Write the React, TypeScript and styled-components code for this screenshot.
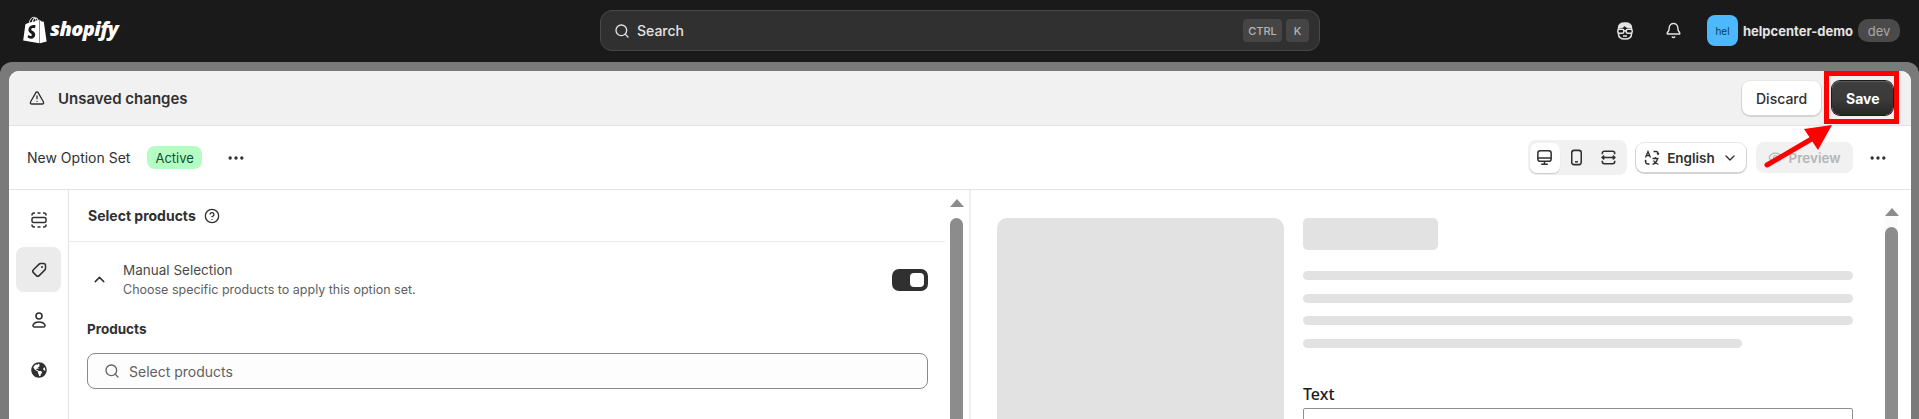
import React from "react";
import styled, { createGlobalStyle } from "styled-components";
import { FaShopify, FaGlobeAmericas } from "react-icons/fa";
import { Search, Bell, TriangleAlert, Ellipsis, ChevronDown, ChevronUp, CircleHelp, Eye } from "lucide-react";

const GlobalStyle = createGlobalStyle`
  html, body { margin: 0; padding: 0; background: #1a1a1a; }
  body { font-family: Inter, "Liberation Sans", sans-serif; }
  * { box-sizing: border-box; }
`;

const Page = styled.div`
  position: relative;
  width: 1919px;
  height: 419px;
  overflow: hidden;
  background: #1a1a1a;
`;

const TopBar = styled.header`
  height: 62px;
  display: grid;
  grid-template-columns: 600px 720px 1fr;
  align-items: start;
  padding-top: 10px;
`;

const Logo = styled.div`
  display: flex;
  align-items: center;
  gap: 3px;
  padding: 6px 0 0 23px;
  color: #fff;
  svg { width: 24px; height: 28px; }
`;

const LogoText = styled.span`
  font-family: "Open Sans", sans-serif;
  font-size: 20px;
  font-style: italic;
  font-weight: 800;
  letter-spacing: -0.6px;
  margin-top: -3px;
`;

const SearchBar = styled.div`
  height: 41px;
  display: flex;
  align-items: center;
  gap: 4px;
  padding: 0 10px 0 13px;
  background: #303030;
  border: 1px solid #484848;
  border-radius: 12px;
  color: #e3e3e3;
  font-size: 14px;
  font-weight: 450;
`;

const SearchLabel = styled.span`
  flex: 1;
  margin-left: 3px;
`;

const Key = styled.kbd<{ $width: number }>`
  width: ${(p) => p.$width}px;
  height: 23px;
  display: flex;
  align-items: center;
  justify-content: center;
  background: #454545;
  border-radius: 4px;
  color: #b5b5b5;
  font: 500 11px Inter, sans-serif;
`;

const TopActions = styled.div`
  display: flex;
  align-items: center;
  height: 41px;
  padding-left: 280px;
  color: #e3e3e3;
`;

const TopIcon = styled.span`
  width: 49px;
  display: flex;
  justify-content: center;
`;

const Avatar = styled.span`
  width: 31px;
  height: 31px;
  margin: 0 5px 0 9px;
  display: flex;
  align-items: center;
  justify-content: center;
  background: #4bb9fb;
  border-radius: 8px;
  color: #0b3d5c;
  font-size: 10px;
`;

const ShopName = styled.span`
  font-size: 13px;
  font-weight: 650;
  color: #e3e3e3;
`;

const DevPill = styled.span`
  margin-left: 5px;
  width: 42px;
  height: 23px;
  display: flex;
  align-items: center;
  justify-content: center;
  background: #4a4a4a;
  border-radius: 10px;
  color: #a8a8a8;
  font-size: 13px;
`;

const Frame = styled.div`
  height: 357px;
  padding: 9px 8px 0 9px;
  background: #7a7a7a;
  border-radius: 12px 12px 0 0;
`;

const Panel = styled.main`
  height: 348px;
  background: #fff;
  border-radius: 10px 10px 0 0;
  overflow: hidden;
`;

const SaveBar = styled.div`
  height: 55px;
  display: flex;
  align-items: center;
  padding: 0 18px 0 20px;
  background: #f1f1f1;
  border-bottom: 1px solid #e3e3e3;
`;

const SaveTitle = styled.span`
  flex: 1;
  display: flex;
  align-items: center;
  gap: 13px;
  color: #303030;
  font-size: 15px;
  font-weight: 600;
`;

const Button = styled.button<{ $dark?: boolean }>`
  height: 34px;
  padding: 0 14px;
  border: 0;
  border-radius: 8px;
  font: ${(p) => (p.$dark ? 650 : 550)} 14px Inter, sans-serif;
  color: ${(p) => (p.$dark ? "#fff" : "#303030")};
  background: ${(p) => (p.$dark ? "linear-gradient(#3f3f3f, #3a3a3a 55%, #262626)" : "#fff")};
  box-shadow: ${(p) =>
    p.$dark
      ? "0 0 0 1px #1a1a1a, inset 0 1px 0 #5a5a5a"
      : "0 1px 0 1px #d4d4d4, 0 0 0 1px #e8e8e8"};
  margin-left: ${(p) => (p.$dark ? "11px" : "0")};
  width: ${(p) => (p.$dark ? "61px" : "79px")};
`;

const SubHeader = styled.div`
  height: 64px;
  display: flex;
  align-items: center;
  padding: 0 23px 0 18px;
  border-bottom: 1px solid #e3e3e3;
`;

const SetName = styled.span`
  font-size: 14px;
  color: #303030;
`;

const Badge = styled.span`
  margin-left: 17px;
  height: 23px;
  padding: 0 8px;
  display: flex;
  align-items: center;
  background: #b4fec3;
  border-radius: 8px;
  color: #0c5132;
  font-size: 13px;
`;

const MoreButton = styled.span`
  display: flex;
  color: #303030;
  margin-left: 24px;
`;

const Spacer = styled.span`
  flex: 1;
`;

const ViewSwitch = styled.div`
  width: 99px;
  height: 35px;
  padding: 2px;
  display: flex;
  align-items: center;
  background: #f1f1f1;
  border-radius: 8px;
  color: #303030;
`;

const ViewOption = styled.span<{ $active?: boolean }>`
  width: 30px;
  height: 30px;
  margin-right: 2px;
  display: flex;
  align-items: center;
  justify-content: center;
  border-radius: 7px;
  background: ${(p) => (p.$active ? "#fff" : "transparent")};
  box-shadow: ${(p) => (p.$active ? "0 1px 1px #c9c9c9" : "none")};
`;

const LangButton = styled.div`
  width: 110px;
  height: 29px;
  margin-left: 9px;
  display: flex;
  align-items: center;
  justify-content: center;
  gap: 7px;
  background: #fff;
  border-radius: 8px;
  box-shadow: 0 1px 0 1px #d4d4d4, 0 0 0 1px #e8e8e8;
  color: #303030;
  font-size: 13.5px;
  font-weight: 600;
`;

const PreviewButton = styled.div`
  width: 97px;
  height: 31px;
  margin-left: 10px;
  display: flex;
  align-items: center;
  justify-content: center;
  gap: 5px;
  background: #f1f1f1;
  border-radius: 8px;
  color: #b5b5b5;
  font-size: 13.5px;
  font-weight: 600;
`;

const EndMore = styled(MoreButton)`
  margin-left: 15px;
`;

const Body = styled.div`
  height: 229px;
  display: flex;
`;

const SideNav = styled.nav`
  width: 60px;
  padding: 7px 7px 0;
  display: flex;
  flex-direction: column;
  gap: 5px;
  border-right: 1px solid #e3e3e3;
  color: #303030;
`;

const NavItem = styled.span<{ $active?: boolean }>`
  width: 45px;
  height: 45px;
  display: flex;
  align-items: center;
  justify-content: center;
  border-radius: 8px;
  background: ${(p) => (p.$active ? "#ebebeb" : "transparent")};
`;

const LeftPane = styled.section`
  position: relative;
  width: 902px;
  padding-right: 24px;
  border-right: 2px solid #efefef;
`;

const SectionHead = styled.div`
  height: 52px;
  display: flex;
  align-items: center;
  gap: 8px;
  padding-left: 19px;
  border-bottom: 1px solid #ebebeb;
  color: #303030;
  font-size: 14px;
  font-weight: 650;
`;

const SelectionRow = styled.div`
  height: 78px;
  display: flex;
  align-items: flex-start;
  padding: 19px 17px 0 22px;
`;

const Chevron = styled.span`
  display: flex;
  width: 32px;
  margin-top: 10px;
  color: #303030;
`;

const SelectionText = styled.div`
  flex: 1;
  line-height: 19px;
`;

const SelectionTitle = styled.div`
  color: #4a4a4a;
  font-size: 13.5px;
`;

const SelectionHint = styled.div`
  color: #616161;
  font-size: 12.5px;
`;

const Toggle = styled.span`
  width: 36px;
  height: 22px;
  margin-top: 8px;
  padding: 4px;
  display: flex;
  justify-content: flex-end;
  background: #303030;
  border-radius: 7px;
`;

const ToggleKnob = styled.span`
  width: 14px;
  height: 14px;
  background: #fff;
  border-radius: 4px;
`;

const FieldBlock = styled.div`
  padding: 0 17px 0 18px;
`;

const FieldLabel = styled.div`
  color: #303030;
  font-size: 13.5px;
  font-weight: 650;
  line-height: 18px;
`;

const SearchField = styled.div`
  height: 36px;
  margin-top: 15px;
  padding-left: 16px;
  display: flex;
  align-items: center;
  gap: 9px;
  background: #fdfdfd;
  border: 1px solid #8a8a8a;
  border-radius: 8px;
  color: #616161;
  font-size: 14px;
`;

const ScrollTrack = styled.div<{ $right: number; $top: number; $bg?: string }>`
  position: absolute;
  top: ${(p) => p.$top}px;
  right: ${(p) => p.$right}px;
  bottom: 0;
  width: 13px;
  background: ${(p) => p.$bg ?? "transparent"};
`;

const ScrollArrow = styled.div`
  width: 0;
  height: 0;
  margin: 0 auto;
  border-left: 7px solid transparent;
  border-right: 7px solid transparent;
  border-bottom: 8px solid #8c8c8c;
`;

const ScrollThumb = styled.div`
  height: 300px;
  margin-top: 11px;
  background: #8c8c8c;
  border-radius: 7px 7px 0 0;
`;

const RightPane = styled.section`
  position: relative;
  flex: 1;
  padding: 28px 0 0 26px;
  display: flex;
  gap: 19px;
  overflow: hidden;
`;

const ImageSkeleton = styled.div`
  width: 287px;
  height: 300px;
  flex: none;
  background: #e2e2e2;
  border-radius: 10px;
`;

const Details = styled.div`
  width: 550px;
`;

const TitleSkeleton = styled.div`
  width: 135px;
  height: 32px;
  background: #e2e2e2;
  border-radius: 5px;
`;

const Lines = styled.div`
  margin-top: 21px;
  display: flex;
  flex-direction: column;
  gap: 13.5px;
`;

const Line = styled.div<{ $short?: boolean }>`
  width: ${(p) => (p.$short ? "439px" : "100%")};
  height: 9px;
  background: #e2e2e2;
  border-radius: 5px;
`;

const TextLabel = styled.div`
  margin-top: 35px;
  color: #1a1a1a;
  font-family: "Noto Sans", sans-serif;
  font-size: 16px;
  font-weight: 500;
  line-height: 22px;
`;

const TextInput = styled.div`
  height: 40px;
  margin-top: 3px;
  border: 1px solid #8f8f8f;
  border-radius: 2px;
`;

const Highlight = styled.div`
  position: absolute;
  left: 1824px;
  top: 71px;
  width: 75px;
  height: 53px;
  border: 5px solid #ff0000;
`;

const ArrowMark = styled.svg`
  position: absolute;
  left: 1760px;
  top: 120px;
`;

const FaceIcon = () => (
  <svg width="20" height="20" viewBox="0 0 20 20" fill="none" stroke="currentColor" strokeWidth="1.5">
    <path d="M3.5 8.500V7C3.500 4 6 2 10 2s6.500 2 6.500 5v1.500" />
    <path d="M4 6.500c3 .3 4.500-.8 5.500-2.200 1.500 1.700 3.500 2.500 6.500 2.200-.5-2.500-2.500-4-6-4s-5.500 1.500-6 4z" fill="currentColor" />
    <path d="M3.500 12v1c0 3 2.500 5 6.500 5s6.500-2 6.500-5v-1" />
    <rect x="2.800" y="8.300" width="6" height="4" rx="1.500" />
    <rect x="11.200" y="8.300" width="6" height="4" rx="1.500" />
    <path d="M8.800 9.800h2.400M8 15h4" />
  </svg>
);

const DesktopIcon = () => (
  <svg width="19" height="19" viewBox="0 0 20 20" fill="none" stroke="currentColor" strokeWidth="1.6">
    <rect x="3" y="3" width="14" height="11" rx="2.500" />
    <path d="M3 10.500h14M10 14v3M6.500 17h7" />
  </svg>
);

const PhoneIcon = () => (
  <svg width="19" height="19" viewBox="0 0 20 20" fill="none" stroke="currentColor" strokeWidth="1.6">
    <rect x="5" y="2.500" width="10" height="15" rx="2.500" />
    <path d="M8.500 14.500h3" />
  </svg>
);

const FitIcon = () => (
  <svg width="19" height="19" viewBox="0 0 20 20" fill="none" stroke="currentColor" strokeWidth="1.6">
    <path d="M3.500 6.500V5.500a2 2 0 0 1 2-2h9a2 2 0 0 1 2 2v1M3.500 13.500v1a2 2 0 0 0 2 2h9a2 2 0 0 0 2-2v-1" />
    <path d="M3 10h14M5.500 8l-2.200 2 2.200 2M14.500 8l2.200 2-2.200 2" />
  </svg>
);

const TranslateIcon = () => (
  <svg width="16" height="16" viewBox="0 0 16 16" fill="none" stroke="currentColor" strokeWidth="1.3">
    <path d="M1.500 7.500L4 1.500l2.500 6M2.500 5.500h3" />
    <path d="M9.500 1.500h2.500a2 2 0 0 1 2 2v1M13 3.200l1 1.300 1-1.300" />
    <path d="M1.500 10.500v1a2.500 2.500 0 0 0 2.500 2.500h1.500M1 11.500l.5-1 1 1" />
    <path d="M8.500 8.500h6M11.500 7v1.500M13.500 8.500c-.5 2.500-2.500 5-5 6M9.500 10.500c.8 1.800 2.600 3.300 5 4" />
  </svg>
);

const DashedCardIcon = () => (
  <svg width="18" height="18" viewBox="0 0 18 18" fill="none" stroke="currentColor" strokeWidth="1.5">
    <rect x="2" y="6.500" width="14" height="5" rx="1.500" />
    <path d="M2 4.500V4a2 2 0 0 1 2-2h1M7.500 2h3M13 2h1a2 2 0 0 1 2 2v.5M2 13.500v.5a2 2 0 0 0 2 2h1M7.500 16h3M13 16h1a2 2 0 0 0 2-2v-.5" />
  </svg>
);

const TagIcon = () => (
  <svg width="18" height="18" viewBox="0 0 18 18" fill="none" stroke="currentColor" strokeWidth="1.5">
    <path d="M10.500 2.500h3a2 2 0 0 1 2 2v3a2 2 0 0 1-.6 1.400l-5.700 5.700a2 2 0 0 1-2.800 0l-3-3a2 2 0 0 1 0-2.800l5.700-5.700a2 2 0 0 1 1.400-.6z" />
    <circle cx="12" cy="6" r="1" fill="currentColor" stroke="none" />
  </svg>
);

const PersonIcon = () => (
  <svg width="18" height="18" viewBox="0 0 18 18" fill="none" stroke="currentColor" strokeWidth="1.6">
    <circle cx="9" cy="5" r="3" />
    <path d="M4.500 16h9a1.500 1.500 0 0 0 1.400-2c-.9-2-3-3-5.900-3s-5 1-5.900 3a1.500 1.500 0 0 0 1.400 2z" />
  </svg>
);

const lineData = [false, false, false, true];

export default function App() {
  return (
    <Page>
      <GlobalStyle />
      <TopBar>
        <Logo>
          <FaShopify />
          <LogoText>shopify</LogoText>
        </Logo>
        <SearchBar>
          <Search size={16} />
          <SearchLabel>Search</SearchLabel>
          <Key $width={39}>CTRL</Key>
          <Key $width={23}>K</Key>
        </SearchBar>
        <TopActions>
          <TopIcon><FaceIcon /></TopIcon>
          <TopIcon><Bell size={17} /></TopIcon>
          <Avatar>hel</Avatar>
          <ShopName>helpcenter-demo</ShopName>
          <DevPill>dev</DevPill>
        </TopActions>
      </TopBar>
      <Frame>
        <Panel>
          <SaveBar>
            <SaveTitle>
              <TriangleAlert size={16} />
              Unsaved changes
            </SaveTitle>
            <Button>Discard</Button>
            <Button $dark>Save</Button>
          </SaveBar>
          <SubHeader>
            <SetName>New Option Set</SetName>
            <Badge>Active</Badge>
            <MoreButton><Ellipsis size={20} /></MoreButton>
            <Spacer />
            <ViewSwitch>
              <ViewOption $active><DesktopIcon /></ViewOption>
              <ViewOption><PhoneIcon /></ViewOption>
              <ViewOption><FitIcon /></ViewOption>
            </ViewSwitch>
            <LangButton>
              <TranslateIcon />
              English
              <ChevronDown size={16} />
            </LangButton>
            <PreviewButton>
              <Eye size={15} />
              Preview
            </PreviewButton>
            <EndMore><Ellipsis size={20} /></EndMore>
          </SubHeader>
          <Body>
            <SideNav>
              <NavItem><DashedCardIcon /></NavItem>
              <NavItem $active><TagIcon /></NavItem>
              <NavItem><PersonIcon /></NavItem>
              <NavItem><FaGlobeAmericas size={16} /></NavItem>
            </SideNav>
            <LeftPane>
              <SectionHead>
                Select products
                <CircleHelp size={16} />
              </SectionHead>
              <SelectionRow>
                <Chevron><ChevronUp size={17} /></Chevron>
                <SelectionText>
                  <SelectionTitle>Manual Selection</SelectionTitle>
                  <SelectionHint>Choose specific products to apply this option set.</SelectionHint>
                </SelectionText>
                <Toggle><ToggleKnob /></Toggle>
              </SelectionRow>
              <FieldBlock>
                <FieldLabel>Products</FieldLabel>
                <SearchField>
                  <Search size={16} />
                  Select products
                </SearchField>
              </FieldBlock>
              <ScrollTrack $right={6} $top={9}>
                <ScrollArrow />
                <ScrollThumb />
              </ScrollTrack>
            </LeftPane>
            <RightPane>
              <ImageSkeleton />
              <Details>
                <TitleSkeleton />
                <Lines>
                  {lineData.map((short, i) => (
                    <Line key={i} $short={short} />
                  ))}
                </Lines>
                <TextLabel>Text</TextLabel>
                <TextInput />
              </Details>
              <ScrollTrack $right={13} $top={18} $bg="#fbfbfb">
                <ScrollArrow />
                <ScrollThumb />
              </ScrollTrack>
            </RightPane>
          </Body>
        </Panel>
      </Frame>
      <Highlight />
      <ArrowMark width="90" height="60" viewBox="0 0 90 60">
        <path d="M7 45 L55 17" stroke="#ff0000" strokeWidth="5" strokeLinecap="round" />
        <path d="M72 5 L44 9 L58 30 Z" fill="#ff0000" />
      </ArrowMark>
    </Page>
  );
}
